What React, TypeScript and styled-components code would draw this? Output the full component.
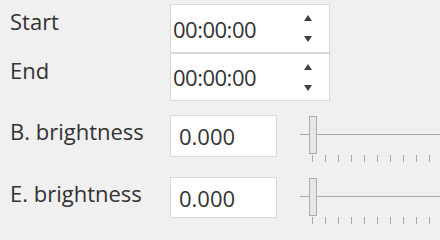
import React from 'react';
import styled, { createGlobalStyle } from 'styled-components';

const GlobalStyle = createGlobalStyle`
  html, body {
    margin: 0;
    padding: 0;
    background: #f0f0f0;
    overflow: hidden;
  }
  body {
    font-family: "Open Sans", "Noto Sans", "Liberation Sans", sans-serif;
    color: #333;
  }
`;

const Panel = styled.div`
  display: flex;
  flex-direction: column;
  padding-top: 4px;
  width: 440px;
  height: 230px;
  box-sizing: border-box;
`;

const Row = styled.div<{ $h: number; $gap?: number }>`
  display: flex;
  align-items: flex-start;
  height: ${(p) => p.$h}px;
  margin-top: ${(p) => p.$gap ?? 0}px;
`;

const Label = styled.div<{ $top: number }>`
  width: 170px;
  flex: none;
  box-sizing: border-box;
  padding-left: 10px;
  padding-top: ${(p) => p.$top}px;
  font-size: 22px;
  line-height: 30px;
  white-space: nowrap;
`;

const TimeBox = styled.div<{ $h: number }>`
  box-sizing: border-box;
  width: 160px;
  height: ${(p) => p.$h}px;
  background: #fff;
  border: 1px solid #d9d9d9;
  display: flex;
  align-items: center;
  padding-left: 2px;
  font-size: 22px;
`;

const TimeText = styled.span`
  flex: 1;
  letter-spacing: -0.5px;
`;

const Spinner = styled.div`
  width: 42px;
  height: 100%;
  display: flex;
  flex-direction: column;
  align-items: center;
  justify-content: center;
  gap: 15px;
`;

const Arrow = styled.span<{ $down?: boolean }>`
  width: 0;
  height: 0;
  border-left: 4px solid transparent;
  border-right: 4px solid transparent;
  ${(p) => (p.$down ? 'border-top: 6px solid #404040;' : 'border-bottom: 6px solid #404040;')}
`;

const NumberBox = styled.div<{ $h: number }>`
  box-sizing: border-box;
  width: 107px;
  height: ${(p) => p.$h}px;
  flex: none;
  background: #fff;
  border: 1px solid #d9d9d9;
  display: flex;
  align-items: center;
  padding-left: 8px;
  font-size: 22px;
`;

const Slider = styled.div`
  position: relative;
  flex: 1;
  margin-left: 23px;
  height: 47px;
`;

const Track = styled.div`
  height: 1px;
  background: #a8a8a8;
  margin-top: 19px;
`;

const Thumb = styled.div`
  position: absolute;
  left: 9px;
  top: 1px;
  width: 8px;
  height: 38px;
  box-sizing: border-box;
  background: #e6e6e6;
  border: 1px solid #adadad;
`;

const Ticks = styled.div`
  display: flex;
  gap: 12px;
  margin-left: 12px;
  margin-top: 20px;
  overflow: hidden;
`;

const Tick = styled.span`
  flex: none;
  width: 1px;
  height: 7px;
  background: #a8a8a8;
`;

const TimeField = ({ h, value }: { h: number; value: string }) => (
  <TimeBox $h={h}>
    <TimeText>{value}</TimeText>
    <Spinner>
      <Arrow />
      <Arrow $down />
    </Spinner>
  </TimeBox>
);

const BrightnessSlider = () => (
  <Slider>
    <Track />
    <Thumb />
    <Ticks>
      {Array.from({ length: 12 }, (_, i) => (
        <Tick key={i} />
      ))}
    </Ticks>
  </Slider>
);

export default function App() {
  return (
    <>
      <GlobalStyle />
      <Panel>
        <Row $h={49}>
          <Label $top={2}>Start</Label>
          <TimeField h={49} value="00:00:00" />
        </Row>
        <Row $h={48}>
          <Label $top={2}>End</Label>
          <TimeField h={48} value="00:00:00" />
        </Row>
        <Row $h={42} $gap={14}>
          <Label $top={1}>B. brightness</Label>
          <NumberBox $h={42}>0.000</NumberBox>
          <BrightnessSlider />
        </Row>
        <Row $h={41} $gap={20}>
          <Label $top={1}>E. brightness</Label>
          <NumberBox $h={41}>0.000</NumberBox>
          <BrightnessSlider />
        </Row>
      </Panel>
    </>
  );
}
